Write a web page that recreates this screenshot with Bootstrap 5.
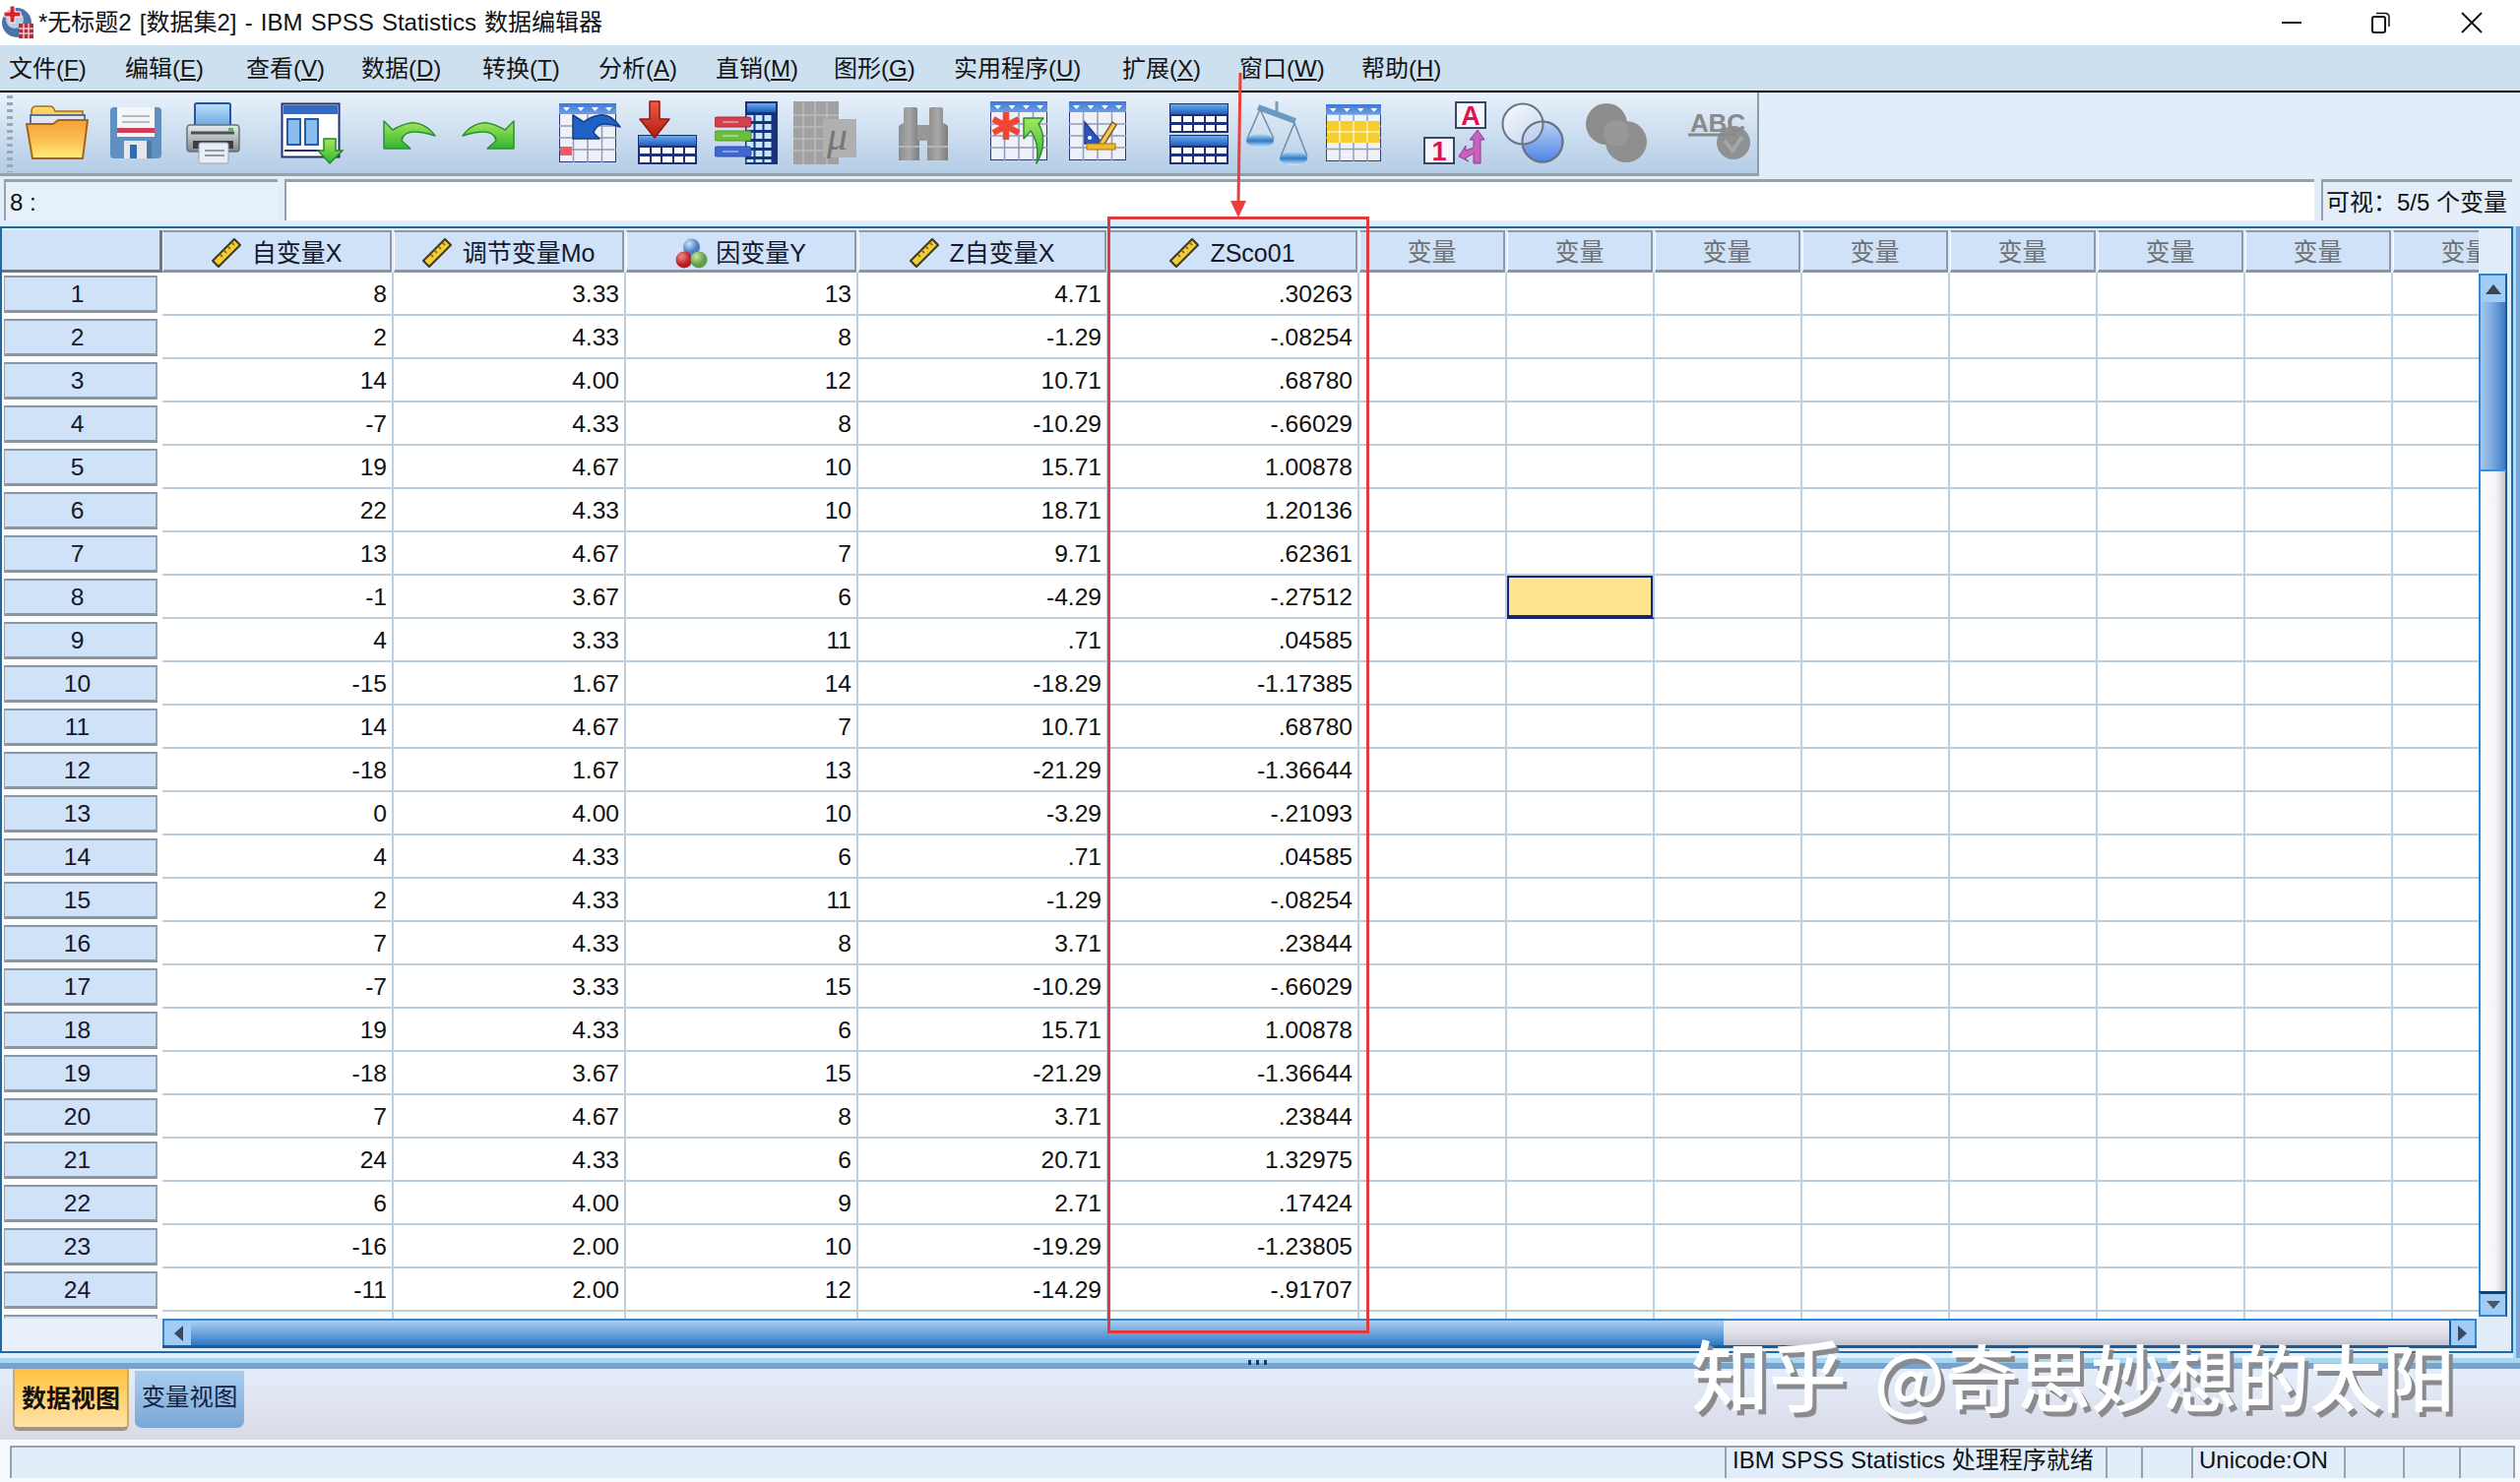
<!DOCTYPE html>
<html lang="zh-CN">
<head>
<meta charset="utf-8">
<title>IBM SPSS Statistics 数据编辑器</title>
<link href="https://cdn.jsdelivr.net/npm/bootstrap@5.3.0/dist/css/bootstrap.min.css" rel="stylesheet">
<style>
html,body{margin:0;padding:0}
body{width:2560px;height:1506px;overflow:hidden;position:relative;background:#e1edf9;color:#111;font-family:"Liberation Sans","Noto Sans CJK SC",sans-serif;font-size:24px;line-height:1.2}
.titlebar{height:46px;background:#fff;padding-left:2px}
.titlebar .ttl{margin-left:5px;white-space:nowrap;word-spacing:1.5px}
.winbtns{display:grid;grid-template-columns:91px 92px 60px;align-items:center}
.menubar{display:grid;height:48px;background:#cde0f0;border-bottom:2px solid #000;padding:2px 0 0 9px;align-items:center;grid-template-columns:118px 123px 117px 123px 118px 119px 120px 122px 171px 119px 124px auto;white-space:nowrap;color:#151515}
.toolrow{height:86px;background:#e1edf9}
.toolstrip{width:1787px;height:85px;background:linear-gradient(#e8f1fb,#b3cce5);border-right:2px solid #8f9ba6;border-bottom:3px solid #97a1aa}
.grip{width:6px;height:78px;margin:3px 0 0 7px;background:repeating-linear-gradient(#9aa8b5 0 3px,transparent 3px 7px)}
.tools{display:grid;margin-left:13px;height:82px;align-items:center;grid-template-columns:80px 78px 101px 99px 80px 103px 79px 80px 80px 100px 97px 80px 103px 79px 78px 103px 79px 85px 104px 64px}
.tools svg{display:block}
.formrow{height:50px;padding:2px 8px 6px 4px;gap:7px}
.fbox{border-top:3px solid #97a1aa;border-left:2px solid #97a1aa;background:#e6f0fb;line-height:42px;padding-left:4px;white-space:nowrap}
.fleft{width:278px}
.fright{width:194px;padding-left:3px;background:#e3eefa}
.finput{background:#fff;border-top:3px solid #97a1aa;border-left:2px solid #97a1aa}
.gridbox{width:2553px;height:1145px;border:2px solid #1f6aa5;background:#e1edf9}
.rstrip{width:7px;height:1150px;background:linear-gradient(90deg,#a9dcf6 0 3px,#7aa4d6 3px);position:relative}
.gtop{height:1108px}
.sheetclip{width:2516px;height:1108px;overflow:hidden;padding-top:2px;background:#e1edf9}
.ssheet{width:2579px;table-layout:fixed;border-collapse:separate;border-spacing:0;margin:0;background:#fff}
.ssheet.table>:not(caption)>*>*{padding:2px 5px 0 0;border-bottom:2px solid #bccede;border-right:2px solid #bcd0e4;border-left:0;border-top:0;height:44px;box-shadow:none;text-align:right;vertical-align:middle;color:#111;font-size:24.6px;line-height:1;background:#fff}
.ssheet.table>thead>tr>th{height:43px;padding:0;border:0;background:#e1edf9;font-weight:400;text-align:center}
.ssheet.table>tbody>tr>td.rh{padding:0 5px 0 2px;border:0;text-align:center;background:#fff}
.ssheet.table>tbody>tr>td.cur{background:#ffe38f;box-shadow:inset 0 0 0 2px #14257a;border-bottom-color:#14257a}
.c0{width:163px}.c1{width:235px}.c2{width:236px}.c3{width:236px}.c4{width:254px}.c5{width:255px}.cv{width:150px}
.hcell{height:43px;padding-top:4px;background:#cfe2f8;border-top:2px solid #8f99a4;border-bottom:3px solid #8b95a0;border-right:2px solid #8f99a4;border-left:1px solid #fff;margin-right:2px;gap:11px;white-space:nowrap;color:#15182a;font-size:25px;overflow:hidden}
.hgap{gap:8px}
.hcorner{border-top:0;border-left:0;border-right:3px solid #6f7882;border-bottom:3px solid #6f7882;margin:0}
.hvar{color:#6e7276;padding-top:2px}
.rcell{height:38px;line-height:33px;padding-right:6px;background:#cfe2f8;border-top:2px solid #8b96a3;border-bottom:3px solid #8b96a3;border-left:1px solid #9aa5b0;border-right:2px solid #9aa5b0;color:#15182a}
.vsb{width:29px;height:1106px;background:#e1edf9}
.vhead{height:46px;background:#e1edf9}
.sbtn{background:#a0ccf6}
.vup{height:29px;border:2px solid #2d86d6;border-bottom:0;border-right:2px solid #1b5a96}
.vthumb{height:172px;background:linear-gradient(90deg,#a6c6ec,#7facdf 45%,#3b7cc3);border-left:2px solid #2d86d6;border-right:2px solid #1b5a96;border-bottom:2px solid #3a8ee0}
.vtrack{background:linear-gradient(90deg,#fff,#f4f4f8 60%,#c8c8d2);border-left:2px solid #2d86d6;border-right:2px solid #1b5a96}
.vdown{height:26px;border:2px solid #2d86d6;border-top:3px solid #14406e;border-right:2px solid #1b5a96}
.gbot{height:33px}
.gblank{width:163px;background:#e8f0fb}
.hsb{height:30px;width:2351px;border-top:2px solid #2d86d6;border-bottom:3px solid #1b5a96}
.hbtnl{width:29px;border-left:2px solid #2d86d6}
.hthumb{width:1557px;background:linear-gradient(#a9cff0,#6ea4dc 50%,#2c78c6)}
.htrack{background:linear-gradient(#efeff5,#e2e2ea 45%,#c4c4d0)}
.hbtnr{width:28px;border-left:2px solid #1b5a96;border-right:2px solid #2d86d6}
.split1{height:5px;background:#a6d8f2}
.split2{height:6px;background:#7ba1cd;position:relative}
.sdots{width:24px;height:5px;margin-top:-3px;background:repeating-linear-gradient(90deg,#1d3c6c 0 3px,transparent 3px 8px)}
.tabarea{height:72px;background:linear-gradient(#e4eefb,#d9d9e5);padding-left:13px;gap:6px}
.vt{display:flex;align-items:center;justify-content:center;white-space:nowrap}
.vtdata{width:118px;height:63px;padding-top:1px;background:linear-gradient(#ffc13f,#ffe3a8);border-left:2px solid #c9ad70;border-right:2px solid #c9ad70;border-bottom:4px solid #a39676;border-radius:0 0 6px 6px;font-weight:700;color:#111;font-size:25px}
.vtvars{width:111px;height:58px;margin-top:2px;padding-bottom:4px;background:linear-gradient(#a9cdf0,#7aa7d7);border-radius:0 0 7px 7px;color:#16233e;font-size:24.4px}
.statusbar{height:48px;padding:6px 5px 6px 10px;background:#f6f9fd;border-bottom:3px solid #a4a9b1}
.seg{height:33px;border-top:2px solid #98a2ac;border-left:2px solid #98a2ac;background:#e1edf9;line-height:26px;padding-left:6px;white-space:nowrap}
.s1{width:1742px}.s2{width:387px}.s3{width:36px}.s4{width:51px}.s5{width:155px}.s6{width:60px}.s7{width:57px}.s8{width:57px;border-right:2px solid #98a2ac}
.redbox{position:absolute;left:1125px;top:220px;width:266px;height:1135px;border:3px solid #e0393e;pointer-events:none}
.redarrow{position:absolute;left:1240px;top:70px}
.zhwm{position:absolute;left:1718px;top:1354px;height:82px;color:#fff;font-family:"Noto Sans CJK SC","Liberation Sans",sans-serif;font-weight:500;text-shadow:4px 5px 0 #8b8b8f;white-space:nowrap;line-height:82px}
.zh1{font-size:79px;margin-right:28px}
.zh2{font-size:74px}
</style>
</head>
<body>
<svg width="0" height="0" class="position-absolute">
<defs>
<linearGradient id="gFold" x1="0" y1="0" x2="0" y2="1"><stop offset="0" stop-color="#f6a035"/><stop offset=".55" stop-color="#fdc154"/><stop offset="1" stop-color="#ffee7a"/></linearGradient>
<linearGradient id="gTab" x1="0" y1="0" x2="0" y2="1"><stop offset="0" stop-color="#ffdf6c"/><stop offset="1" stop-color="#e9a93a"/></linearGradient>
<linearGradient id="gGreen" x1="0" y1="0" x2="0" y2="1"><stop offset="0" stop-color="#a8e65c"/><stop offset="1" stop-color="#2fb52f"/></linearGradient>
<linearGradient id="gHdr" x1="0" y1="0" x2="0" y2="1"><stop offset="0" stop-color="#6fa9ec"/><stop offset="1" stop-color="#1a5fc0"/></linearGradient>
<linearGradient id="gHdr2" x1="0" y1="0" x2="0" y2="1"><stop offset="0" stop-color="#3f78d4"/><stop offset="1" stop-color="#6d9fe6"/></linearGradient>
<linearGradient id="gRed" x1="0" y1="0" x2="0" y2="1"><stop offset="0" stop-color="#f05a46"/><stop offset="1" stop-color="#b01c10"/></linearGradient>
<linearGradient id="gBody" x1="0" y1="0" x2="0" y2="1"><stop offset="0" stop-color="#e8ecee"/><stop offset="1" stop-color="#7f868a"/></linearGradient>
<linearGradient id="gPaper" x1="0" y1="0" x2="0" y2="1"><stop offset="0" stop-color="#bfe2fb"/><stop offset="1" stop-color="#5f9fe4"/></linearGradient>
<linearGradient id="gVen" x1="0" y1="0" x2="1" y2="1"><stop offset="0" stop-color="#fff"/><stop offset="1" stop-color="#c4d4ee"/></linearGradient>
<linearGradient id="gVen2" x1="0" y1="0" x2="0" y2="1"><stop offset="0" stop-color="#bcd2f4"/><stop offset="1" stop-color="#4f84e8"/></linearGradient>
<linearGradient id="gBowl" x1="0" y1="0" x2="0" y2="1"><stop offset="0" stop-color="#bcdcf6"/><stop offset=".5" stop-color="#2d7cc8"/><stop offset="1" stop-color="#d6ebfb"/></linearGradient>
<linearGradient id="gBino" x1="0" y1="0" x2="1" y2="0"><stop offset="0" stop-color="#8b8b8b"/><stop offset=".5" stop-color="#a8a8a8"/><stop offset="1" stop-color="#7d7d7d"/></linearGradient>
<radialGradient id="bB" cx=".35" cy=".3"><stop offset="0" stop-color="#cfe4fb"/><stop offset="1" stop-color="#4a7fc4"/></radialGradient>
<radialGradient id="bR" cx=".35" cy=".3"><stop offset="0" stop-color="#f28a8a"/><stop offset="1" stop-color="#bb1c24"/></radialGradient>
<radialGradient id="bG" cx=".35" cy=".3"><stop offset="0" stop-color="#c8e8a0"/><stop offset="1" stop-color="#5f9f45"/></radialGradient>
<symbol id="tb" viewBox="0 0 58 60">
<rect x=".5" y=".5" width="57" height="59" fill="#eef1f7" stroke="#2a3a70"/>
<path d="M14.5 11V60M29 11V60M43.5 11V60M0 23H58M0 35H58M0 47H58" stroke="#8f9cba" stroke-width="1.5" fill="none"/>
<rect width="58" height="11" fill="url(#gHdr2)"/>
<path d="M4 4h7l-3.500 4zM18.500 4h7L22 8zM33 4h7l-3.500 4zM47 4h7l-3.500 4z" fill="#fff"/>
</symbol>
<symbol id="tbb" viewBox="0 0 60 30">
<rect width="60" height="30" fill="#1c2f78"/>
<rect x="1" y="1" width="58" height="10" fill="url(#gHdr)"/>
<path d="M2 13H12V19H2zM14 13H23V19H14zM25 13H35V19H25zM37 13H46V19H37zM48 13H58V19H48zM2 22H12V28H2zM14 22H23V28H14zM25 22H35V28H25zM37 22H46V28H37zM48 22H58V28H48z" fill="#fff"/>
</symbol>
<symbol id="rul" viewBox="0 0 30 30">
<path d="M1 23 23 1 29 7 7 29Z" fill="#f3cb35" stroke="#3b3820" stroke-width="2" stroke-linejoin="round"/>
<path d="M8 16l3 3M12 12l3 3M16 8l3 3M20 4l3 3" stroke="#6f5f18" stroke-width="1.500"/>
</symbol>
</defs>
</svg>

<header class="titlebar d-flex align-items-center justify-content-between">
  <div class="d-flex align-items-center">
    <svg width="32" height="34" viewBox="0 0 32 34"><circle cx="15" cy="17" r="15" fill="#4c73a6"/><circle cx="13" cy="14" r="9" fill="#b9cfe6"/><path d="M8 0h5v6h6v5h-6v6H8v-6H2V6h6z" fill="#d8232a" stroke="#fff" stroke-width="1"/><rect x="17" y="18" width="15" height="15" fill="#b03040"/><path d="M17 23h15M17 28h15M22 18v15M27 18v15" stroke="#f4c8cc" stroke-width="1.500"/></svg>
    <span class="ttl">*无标题2 [数据集2] - IBM SPSS Statistics 数据编辑器</span>
  </div>
  <div class="winbtns">
    <svg width="22" height="22" viewBox="0 0 22 22"><path d="M1 11H21" stroke="#111" stroke-width="2"/></svg>
    <svg width="22" height="22" viewBox="0 0 22 22"><rect x="2" y="5" width="13" height="16" rx="2" fill="none" stroke="#111" stroke-width="2"/><path d="M6 1.500H15Q19 1.500 19 5.500V15" fill="none" stroke="#111" stroke-width="1.500"/></svg>
    <svg width="22" height="22" viewBox="0 0 22 22"><path d="M1 1 21 21M21 1 1 21" stroke="#111" stroke-width="1.800"/></svg>
  </div>
</header>

<nav class="menubar">
  <span>文件(<u>F</u>)</span><span>编辑(<u>E</u>)</span><span>查看(<u>V</u>)</span><span>数据(<u>D</u>)</span><span>转换(<u>T</u>)</span><span>分析(<u>A</u>)</span><span>直销(<u>M</u>)</span><span>图形(<u>G</u>)</span><span>实用程序(<u>U</u>)</span><span>扩展(<u>X</u>)</span><span>窗口(<u>W</u>)</span><span>帮助(<u>H</u>)</span>
</nav>

<div class="toolrow">
<div class="toolstrip d-flex">
<div class="grip"></div>
<div class="tools">
<!-- open -->
<svg width="64" height="72" viewBox="0 0 64 72"><path d="M6 30V14q0-5 5-5h14q3 0 5 5h28v16z" fill="url(#gTab)" stroke="#b06a1c" stroke-width="1.500"/><path d="M5 18H60V34H5z" fill="#dfe7f4" stroke="#30508e" stroke-width="1.500"/><path d="M1 27H28L33 23H63L58 62H7Z" fill="url(#gFold)" stroke="#a9641c" stroke-width="2" stroke-linejoin="round"/></svg>
<!-- save -->
<svg width="64" height="72" viewBox="0 0 64 72"><rect x="6" y="10" width="52" height="52" rx="4" fill="#5f90c2"/><rect x="13" y="10" width="38" height="30" fill="#f3f5f8"/><path d="M18 19H46M18 25H46" stroke="#b5bac2" stroke-width="2"/><rect x="13" y="31" width="38" height="5" fill="#cf3f58"/><rect x="20" y="44" width="28" height="18" fill="#e6e8ec"/><rect x="43" y="44" width="5" height="18" fill="#5078a6"/><rect x="26" y="48" width="7" height="14" fill="#2f6cb0"/></svg>
<!-- print -->
<svg width="64" height="72" viewBox="0 0 64 72"><rect x="14" y="6" width="36" height="26" rx="2" fill="url(#gPaper)" stroke="#25569f" stroke-width="2"/><path d="M9 28H56Q59 28 59 32V52Q59 55 56 55H9Q6 55 6 52V32Q6 28 9 28Z" fill="url(#gBody)" stroke="#6a7074" stroke-width="1.500"/><path d="M10 36H54" stroke="#4b5054" stroke-width="3"/><rect x="48" y="31" width="5" height="4" fill="#59b85a"/><rect x="12" y="44" width="41" height="8" fill="#3b3f44"/><rect x="18" y="46" width="30" height="21" rx="2" fill="#e7eef5" stroke="#9aa6b0"/><path d="M24 54H44M24 59H44" stroke="#8f9aa4" stroke-width="2"/></svg>
<!-- var sheet -->
<svg width="64" height="72" viewBox="0 0 64 72"><rect x="1.500" y="6.500" width="58" height="54" fill="#fff" stroke="#1f2f70" stroke-width="2"/><rect x="3" y="8" width="55" height="9" fill="#2f6cc8"/><rect x="7" y="22" width="13" height="26" fill="#8cbcec" stroke="#1d5fb0" stroke-width="2"/><rect x="25" y="22" width="13" height="26" fill="#8cbcec" stroke="#1d5fb0" stroke-width="2"/><path d="M4 54H40" stroke="#1f2f70" stroke-width="2"/><path d="M44 42H56V54H63L50 67 38 54H44Z" fill="url(#gGreen)" stroke="#1f8a2a" stroke-width="1.500"/></svg>
<!-- undo -->
<svg width="64" height="72" viewBox="0 0 64 72"><path d="M6 24V52H33L24 44C25 38 30 35 37 35 44 35 52 37 58 39 51 29 41 25 33 26 26 27 20 30 15 33Z" fill="url(#gGreen)" stroke="#2a8f36" stroke-width="1.500" stroke-linejoin="round"/></svg>
<!-- redo -->
<svg width="64" height="72" viewBox="0 0 64 72"><path transform="translate(64 0) scale(-1 1)" d="M6 24V52H33L24 44C25 38 30 35 37 35 44 35 52 37 58 39 51 29 41 25 33 26 26 27 20 30 15 33Z" fill="url(#gGreen)" stroke="#2a8f36" stroke-width="1.500" stroke-linejoin="round"/></svg>
<!-- goto -->
<svg width="64" height="72" viewBox="0 0 64 72"><use href="#tb" x="1" y="6" width="58" height="60"/><rect x="2" y="50" width="12" height="9" fill="#f25a68"/><path d="M15 18V42H42L36 36C38 30 42 27 47 27 52 27 58 28 63 30 57 21 49 17 42 18 36 19 31 21 26 25Z" fill="#1f62c6" stroke="#123f8c" stroke-width="1.500" stroke-linejoin="round"/></svg>
<!-- insert -->
<svg width="64" height="72" viewBox="0 0 64 72"><use href="#tbb" x="2" y="38" width="60" height="30"/><path d="M14 4H24V22H34L19 41 4 22H14Z" fill="url(#gRed)" stroke="#8c1810" stroke-width="1.500" stroke-linejoin="round"/></svg>
<!-- vars -->
<svg width="64" height="72" viewBox="0 0 64 72"><rect x="31" y="4" width="33" height="64" fill="#18327e"/><rect x="33" y="6" width="29" height="9" fill="url(#gHdr)"/><path d="M36 18V66M45 18V66M54 18V66" stroke="#c6e8fb" stroke-width="7" stroke-dasharray="6 3"/><rect x="0" y="20" width="37" height="10" rx="2" fill="#d6404e" stroke="#a82838"/><rect x="0" y="34" width="37" height="10" rx="2" fill="#6cbc3e" stroke="#4c9a2a"/><rect x="0" y="50" width="37" height="10" rx="2" fill="#4266d2" stroke="#2d4aa8"/><path d="M8 25H24M8 39H24M8 55H24" stroke="#fff" stroke-opacity=".5" stroke-width="1.500"/></svg>
<!-- mu -->
<svg width="64" height="72" viewBox="0 0 64 72"><rect x="0" y="4" width="46" height="64" fill="#a1a1a1"/><path d="M10 4V68M22 4V68M34 4V68M0 18H46M0 30H46M0 42H46M0 54H46" stroke="#bdbdbd" stroke-width="1.500"/><rect x="30" y="22" width="34" height="39" fill="#b0b0b0"/><text x="34" y="53" font-family="Liberation Serif,serif" font-size="42" font-style="italic" fill="#767676">μ</text></svg>
<!-- binoculars -->
<svg width="64" height="72" viewBox="0 0 64 72"><path d="M12 12q0-2 2-2h10q2 0 2 2V28h2V64H7V30Q7 28 12 26Z" fill="url(#gBino)"/><path d="M38 12q0-2 2-2h10q2 0 2 2v14q5 2 5 4V64H36V28h2Z" fill="url(#gBino)"/><rect x="26" y="28" width="12" height="16" fill="#989898"/><path d="M7 50H28M36 50H57" stroke="#b4b4b4" stroke-width="2"/></svg>
<!-- asterisk table -->
<svg width="64" height="72" viewBox="0 0 64 72"><use href="#tb" x="3" y="4" width="58" height="60"/><path d="M19 15V43M6 22 32 36M32 22 6 36" stroke="#f04632" stroke-width="6.500"/><path d="M37 21H57L52 27C58 36 59 52 50 67 52 54 50 42 44 34L37 42Z" fill="url(#gGreen)" stroke="#2a8f36" stroke-width="1.500" stroke-linejoin="round"/></svg>
<!-- weight table -->
<svg width="64" height="72" viewBox="0 0 64 72"><use href="#tb" x="3" y="4" width="58" height="60"/><path d="M19 25V47H37Z" fill="#2c55c4" stroke="#1d3a90" stroke-width="1.500"/><circle cx="24" cy="41" r="2" fill="#fff"/><path d="M33 47 47 25 51 28 38 49Z" fill="#f0c95c" stroke="#8c5a24" stroke-width="1.500"/><rect x="21" y="47" width="29" height="6" fill="#f2b92e" stroke="#a27712"/></svg>
<!-- split tables -->
<svg width="64" height="72" viewBox="0 0 64 72"><use href="#tbb" x="2" y="6" width="60" height="30"/><use href="#tbb" x="2" y="38" width="60" height="30"/></svg>
<!-- scale -->
<svg width="64" height="72" viewBox="0 0 64 72"><path d="M32 4V20" stroke="#7f9fb8" stroke-width="3"/><path d="M13 10 51 24" stroke="#6a9ac0" stroke-width="6"/><path d="M15 12 2 42M15 12 29 42M50 26 36 60M50 26 63 60" stroke="#6f8ca8" stroke-width="1.500" fill="none"/><ellipse cx="15" cy="44" rx="14" ry="7" fill="url(#gBowl)"/><ellipse cx="49" cy="62" rx="14" ry="7" fill="url(#gBowl)"/></svg>
<!-- yellow table -->
<svg width="64" height="72" viewBox="0 0 64 72"><use href="#tb" x="4" y="6" width="56" height="60"/><rect x="5" y="24" width="54" height="22" fill="#f6cf2e"/><path d="M18 24V46M32 24V46M46 24V46M5 35H59" stroke="#fff" stroke-width="1"/></svg>
<!-- A1 -->
<svg width="64" height="72" viewBox="0 0 64 72"><rect x="33" y="5" width="30" height="26" fill="#f4f6fb" stroke="#3a4668" stroke-width="2"/><text x="48" y="28" text-anchor="middle" font-family="Liberation Sans,sans-serif" font-weight="700" font-size="27" fill="#e01050">A</text><rect x="1" y="41" width="30" height="26" fill="#f4f6fb" stroke="#3a4668" stroke-width="2"/><text x="16" y="64" text-anchor="middle" font-family="Liberation Sans,sans-serif" font-weight="700" font-size="27" fill="#e01050">1</text><path d="M55 33 62 43H58V67H51V57L42 62 46 65 36 60 43 49 43 54 51 51V43H47Z" fill="#c860c0" stroke="#8c3a8c" stroke-linejoin="round"/></svg>
<!-- venn colour -->
<svg width="64" height="72" viewBox="0 0 64 72"><circle cx="42" cy="45" r="20.500" fill="url(#gVen2)" stroke="#667688" stroke-width="2"/><circle cx="22" cy="27" r="20.500" fill="url(#gVen)" fill-opacity=".75" stroke="#667688" stroke-width="2"/><circle cx="42" cy="45" r="20.500" fill="none" stroke="#667688" stroke-width="2"/></svg>
<!-- venn grey -->
<svg width="64" height="72" viewBox="0 0 64 72"><circle cx="22" cy="27" r="21" fill="#8c8c8c"/><circle cx="42" cy="45" r="21" fill="#8f8f8f"/><circle cx="32" cy="36" r="13" fill="#989898"/></svg>
<!-- ABC -->
<svg width="64" height="72" viewBox="0 0 64 72"><text x="3" y="35" font-family="Liberation Sans,sans-serif" font-size="26" font-weight="700" fill="#8a8a8a" textLength="56">ABC</text><path d="M1 38H50" stroke="#8a8a8a" stroke-width="3"/><circle cx="47" cy="46" r="17" fill="#8a8a8a" fill-opacity=".92"/><path d="M38 44 46 54 56 40" stroke="#a6a6a6" stroke-width="4" fill="none"/></svg>
</div>
</div>
</div>

<div class="formrow d-flex">
  <div class="fbox fleft">8 :</div>
  <div class="finput flex-grow-1"></div>
  <div class="fbox fright">可视：5/5 个变量</div>
</div>

<div class="d-flex">
<main class="gridbox d-flex flex-column">
  <div class="gtop d-flex">
    <div class="sheetclip">
      <table class="table ssheet">
        <colgroup><col class="c0"><col class="c1"><col class="c2"><col class="c3"><col class="c4"><col class="c5"><col class="cv"><col class="cv"><col class="cv"><col class="cv"><col class="cv"><col class="cv"><col class="cv"><col class="cv"></colgroup>
        <thead><tr>
          <th><div class="hcell hcorner"></div></th>
          <th><div class="hcell d-flex align-items-center justify-content-center"><svg width="30" height="30"><use href="#rul"/></svg><span>自变量X</span></div></th>
          <th><div class="hcell d-flex align-items-center justify-content-center"><svg width="30" height="30"><use href="#rul"/></svg><span>调节变量Mo</span></div></th>
          <th><div class="hcell hgap d-flex align-items-center justify-content-center"><svg width="33" height="31" viewBox="0 0 33 31"><circle cx="16.500" cy="9" r="8.500" fill="url(#bB)"/><circle cx="9" cy="22" r="8.500" fill="url(#bR)"/><circle cx="24" cy="22" r="8.500" fill="url(#bG)"/></svg><span>因变量Y</span></div></th>
          <th><div class="hcell d-flex align-items-center justify-content-center"><svg width="30" height="30"><use href="#rul"/></svg><span>Z自变量X</span></div></th>
          <th><div class="hcell d-flex align-items-center justify-content-center"><svg width="30" height="30"><use href="#rul"/></svg><span>ZSco01</span></div></th>
          <th><div class="hcell hvar d-flex align-items-center justify-content-center">变量</div></th>
          <th><div class="hcell hvar d-flex align-items-center justify-content-center">变量</div></th>
          <th><div class="hcell hvar d-flex align-items-center justify-content-center">变量</div></th>
          <th><div class="hcell hvar d-flex align-items-center justify-content-center">变量</div></th>
          <th><div class="hcell hvar d-flex align-items-center justify-content-center">变量</div></th>
          <th><div class="hcell hvar d-flex align-items-center justify-content-center">变量</div></th>
          <th><div class="hcell hvar d-flex align-items-center justify-content-center">变量</div></th>
          <th><div class="hcell hvar d-flex align-items-center justify-content-center">变量</div></th>
        </tr></thead>
        <tbody>
<tr><td class="rh"><div class="rcell">1</div></td><td>8</td><td>3.33</td><td>13</td><td>4.71</td><td>.30263</td><td></td><td></td><td></td><td></td><td></td><td></td><td></td><td></td></tr>
<tr><td class="rh"><div class="rcell">2</div></td><td>2</td><td>4.33</td><td>8</td><td>-1.29</td><td>-.08254</td><td></td><td></td><td></td><td></td><td></td><td></td><td></td><td></td></tr>
<tr><td class="rh"><div class="rcell">3</div></td><td>14</td><td>4.00</td><td>12</td><td>10.71</td><td>.68780</td><td></td><td></td><td></td><td></td><td></td><td></td><td></td><td></td></tr>
<tr><td class="rh"><div class="rcell">4</div></td><td>-7</td><td>4.33</td><td>8</td><td>-10.29</td><td>-.66029</td><td></td><td></td><td></td><td></td><td></td><td></td><td></td><td></td></tr>
<tr><td class="rh"><div class="rcell">5</div></td><td>19</td><td>4.67</td><td>10</td><td>15.71</td><td>1.00878</td><td></td><td></td><td></td><td></td><td></td><td></td><td></td><td></td></tr>
<tr><td class="rh"><div class="rcell">6</div></td><td>22</td><td>4.33</td><td>10</td><td>18.71</td><td>1.20136</td><td></td><td></td><td></td><td></td><td></td><td></td><td></td><td></td></tr>
<tr><td class="rh"><div class="rcell">7</div></td><td>13</td><td>4.67</td><td>7</td><td>9.71</td><td>.62361</td><td></td><td></td><td></td><td></td><td></td><td></td><td></td><td></td></tr>
<tr><td class="rh"><div class="rcell">8</div></td><td>-1</td><td>3.67</td><td>6</td><td>-4.29</td><td>-.27512</td><td></td><td class="cur"></td><td></td><td></td><td></td><td></td><td></td><td></td></tr>
<tr><td class="rh"><div class="rcell">9</div></td><td>4</td><td>3.33</td><td>11</td><td>.71</td><td>.04585</td><td></td><td></td><td></td><td></td><td></td><td></td><td></td><td></td></tr>
<tr><td class="rh"><div class="rcell">10</div></td><td>-15</td><td>1.67</td><td>14</td><td>-18.29</td><td>-1.17385</td><td></td><td></td><td></td><td></td><td></td><td></td><td></td><td></td></tr>
<tr><td class="rh"><div class="rcell">11</div></td><td>14</td><td>4.67</td><td>7</td><td>10.71</td><td>.68780</td><td></td><td></td><td></td><td></td><td></td><td></td><td></td><td></td></tr>
<tr><td class="rh"><div class="rcell">12</div></td><td>-18</td><td>1.67</td><td>13</td><td>-21.29</td><td>-1.36644</td><td></td><td></td><td></td><td></td><td></td><td></td><td></td><td></td></tr>
<tr><td class="rh"><div class="rcell">13</div></td><td>0</td><td>4.00</td><td>10</td><td>-3.29</td><td>-.21093</td><td></td><td></td><td></td><td></td><td></td><td></td><td></td><td></td></tr>
<tr><td class="rh"><div class="rcell">14</div></td><td>4</td><td>4.33</td><td>6</td><td>.71</td><td>.04585</td><td></td><td></td><td></td><td></td><td></td><td></td><td></td><td></td></tr>
<tr><td class="rh"><div class="rcell">15</div></td><td>2</td><td>4.33</td><td>11</td><td>-1.29</td><td>-.08254</td><td></td><td></td><td></td><td></td><td></td><td></td><td></td><td></td></tr>
<tr><td class="rh"><div class="rcell">16</div></td><td>7</td><td>4.33</td><td>8</td><td>3.71</td><td>.23844</td><td></td><td></td><td></td><td></td><td></td><td></td><td></td><td></td></tr>
<tr><td class="rh"><div class="rcell">17</div></td><td>-7</td><td>3.33</td><td>15</td><td>-10.29</td><td>-.66029</td><td></td><td></td><td></td><td></td><td></td><td></td><td></td><td></td></tr>
<tr><td class="rh"><div class="rcell">18</div></td><td>19</td><td>4.33</td><td>6</td><td>15.71</td><td>1.00878</td><td></td><td></td><td></td><td></td><td></td><td></td><td></td><td></td></tr>
<tr><td class="rh"><div class="rcell">19</div></td><td>-18</td><td>3.67</td><td>15</td><td>-21.29</td><td>-1.36644</td><td></td><td></td><td></td><td></td><td></td><td></td><td></td><td></td></tr>
<tr><td class="rh"><div class="rcell">20</div></td><td>7</td><td>4.67</td><td>8</td><td>3.71</td><td>.23844</td><td></td><td></td><td></td><td></td><td></td><td></td><td></td><td></td></tr>
<tr><td class="rh"><div class="rcell">21</div></td><td>24</td><td>4.33</td><td>6</td><td>20.71</td><td>1.32975</td><td></td><td></td><td></td><td></td><td></td><td></td><td></td><td></td></tr>
<tr><td class="rh"><div class="rcell">22</div></td><td>6</td><td>4.00</td><td>9</td><td>2.71</td><td>.17424</td><td></td><td></td><td></td><td></td><td></td><td></td><td></td><td></td></tr>
<tr><td class="rh"><div class="rcell">23</div></td><td>-16</td><td>2.00</td><td>10</td><td>-19.29</td><td>-1.23805</td><td></td><td></td><td></td><td></td><td></td><td></td><td></td><td></td></tr>
<tr><td class="rh"><div class="rcell">24</div></td><td>-11</td><td>2.00</td><td>12</td><td>-14.29</td><td>-.91707</td><td></td><td></td><td></td><td></td><td></td><td></td><td></td><td></td></tr>
<tr><td class="rh"><div class="rcell"></div></td><td></td><td></td><td></td><td></td><td></td><td></td><td></td><td></td><td></td><td></td><td></td><td></td><td></td></tr>
        </tbody>
      </table>
    </div>
    <div class="vsb d-flex flex-column">
      <div class="vhead"></div>
      <div class="sbtn vup d-flex align-items-center justify-content-center"><svg width="18" height="12" viewBox="0 0 18 12"><path d="M9 1 17 11H1Z" fill="#3a4654"/></svg></div>
      <div class="vthumb"></div>
      <div class="vtrack flex-grow-1"></div>
      <div class="sbtn vdown d-flex align-items-center justify-content-center"><svg width="16" height="10" viewBox="0 0 16 10"><path d="M8 9 15 1H1Z" fill="#4a5664"/></svg></div>
    </div>
  </div>
  <div class="gbot d-flex">
    <div class="gblank"></div>
    <div class="hsb d-flex">
      <div class="sbtn hbtnl d-flex align-items-center justify-content-center"><svg width="12" height="18" viewBox="0 0 12 18"><path d="M2 9 11 1V17Z" fill="#3e4a58"/></svg></div>
      <div class="hthumb"></div>
      <div class="htrack flex-grow-1"></div>
      <div class="sbtn hbtnr d-flex align-items-center justify-content-center"><svg width="12" height="18" viewBox="0 0 12 18"><path d="M10 9 1 1V17Z" fill="#3e4a58"/></svg></div>
    </div>
  </div>
</main>
<div class="rstrip"></div>
</div>

<div class="split1"></div>
<div class="split2 d-flex justify-content-center align-items-start"><div class="sdots"></div></div>

<div class="tabarea d-flex align-items-start">
  <div class="vt vtdata">数据视图</div>
  <div class="vt vtvars">变量视图</div>
</div>

<footer class="statusbar d-flex">
  <div class="seg s1"></div>
  <div class="seg s2">IBM SPSS Statistics 处理程序就绪</div>
  <div class="seg s3"></div>
  <div class="seg s4"></div>
  <div class="seg s5">Unicode:ON</div>
  <div class="seg s6"></div>
  <div class="seg s7"></div>
  <div class="seg s8"></div>
</footer>

<div class="redbox"></div>
<svg class="redarrow" width="40" height="152" viewBox="0 0 40 152"><path d="M20 4 18 136" stroke="#e8403c" stroke-width="3"/><path d="M10 134H26L18 151Z" fill="#e8403c"/></svg>
<div class="zhwm"><span class="zh1">知乎</span><span class="zh2">@奇思妙想的太阳</span></div>

<script src="https://cdn.jsdelivr.net/npm/bootstrap@5.3.0/dist/js/bootstrap.bundle.min.js"></script>
</body>
</html>
